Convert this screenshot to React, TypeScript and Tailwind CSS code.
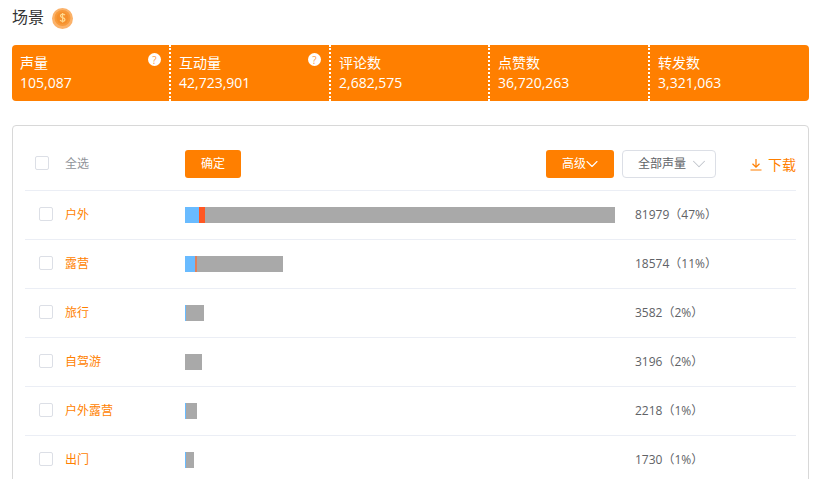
import { ChevronDown } from "lucide-react";

const font = "font-['Open_Sans','Noto_Sans_CJK_SC',sans-serif]";

const stats = [
  { label: "声量", value: "105,087", help: true, width: "w-[159px]" },
  { label: "互动量", value: "42,723,901", help: true, width: "w-[160px]" },
  { label: "评论数", value: "2,682,575", help: false, width: "w-[159px]" },
  { label: "点赞数", value: "36,720,263", help: false, width: "w-[160px]" },
  { label: "转发数", value: "3,321,063", help: false, width: "flex-1" },
];

const rows = [
  { name: "户外", count: "81979（47%）", total: 430, blue: 14, red: 6, redColor: "bg-[#ff5722]" },
  { name: "露营", count: "18574（11%）", total: 97.5, blue: 10, red: 1.5, redColor: "bg-[#e0805a]" },
  { name: "旅行", count: "3582（2%）", total: 19, blue: 1, red: 0, redColor: "" },
  { name: "自驾游", count: "3196（2%）", total: 17, blue: 0, red: 0, redColor: "" },
  { name: "户外露营", count: "2218（1%）", total: 12, blue: 1, red: 0, redColor: "" },
  { name: "出门", count: "1730（1%）", total: 9, blue: 1, red: 0, redColor: "" },
];

function Coin() {
  return (
    <svg width="21" height="21" viewBox="0 0 21 21">
      <circle cx="10.5" cy="10.5" r="10.5" fill="#fbb26a" />
      <circle cx="10.5" cy="10" r="8" fill="#f79a3a" />
      <circle cx="10.5" cy="10" r="6" fill="#f58f2c" />
      <path d="M13 7.2c-.6-.7-1.5-1-2.5-1-1.2 0-2 .7-2 1.7 0 2.2 4.4 1.3 4.4 3.6 0 1-.9 1.8-2.2 1.8-1 0-2-.4-2.6-1.1M10.6 5v9.6" fill="none" stroke="#ffd98f" strokeWidth="1.2" />
    </svg>
  );
}

function Help() {
  return (
    <span className="absolute right-[8px] top-[8px] flex h-[13px] w-[13px] items-center justify-center rounded-full bg-white text-[10px] leading-none text-[#ff9d45]">
      ?
    </span>
  );
}

function Checkbox() {
  return <span className="block h-[14px] w-[14px] rounded-[2px] border border-[#dcdfe6] bg-white" />;
}

function DownloadIcon() {
  return (
    <svg width="12" height="13" viewBox="0 0 12 13" fill="none" stroke="currentColor" strokeWidth="1.2">
      <path d="M6 1v8M2.5 5.8 6 9.2l3.5-3.4M0.5 12h11" />
    </svg>
  );
}

export default function App() {
  return (
    <div className={`${font} h-[479px] overflow-hidden bg-white pl-3 pr-[10px]`}>
      <div className="flex h-[45px] items-start pt-[7px]">
        <span className="text-[16px] leading-[20px] text-[#333]">场景</span>
        <span className="ml-[8px] mt-[1px]">
          <Coin />
        </span>
      </div>

      <div className="flex h-14 rounded-[4px] bg-[#ff7f00] text-white">
        {stats.map((s, i) => (
          <div
            key={s.label}
            className={`relative ${s.width} pl-2 pt-[8px] ${i < 4 ? "border-r-2 border-dotted border-white" : ""}`}
          >
            <div className="text-[14px] leading-[20px]">{s.label}</div>
            <div className="text-[14px] leading-[20px]">{s.value}</div>
            {s.help && <Help />}
          </div>
        ))}
      </div>

      <div className="mt-6 rounded-[4px] border border-[#d8d8d8] px-3">
        <div className="flex h-[65px] items-center border-b border-[#ebeef5] pt-3">
          <div className="mb-[2px] ml-[10px]">
            <Checkbox />
          </div>
          <span className="ml-[16px] w-[120px] text-[12px] text-[#909399]">全选</span>
          <button className="h-7 w-14 rounded-[3px] bg-[#ff7f00] text-[12px] text-white">确定</button>
          <button className="ml-auto flex h-7 w-[68px] items-center rounded-[3px] bg-[#ff7f00] pl-4 text-[12px] text-white">
            高级
            <ChevronDown size={20} strokeWidth={1.3} className="-ml-1" />
          </button>
          <div className="ml-2 flex h-7 w-[94px] items-center justify-between rounded-[4px] border border-[#dcdfe6] pl-[15px] pr-[5px] text-[12px] text-[#606266]">
            全部声量
            <ChevronDown size={22} strokeWidth={1.1} className="text-[#c0c4cc]" />
          </div>
          <div className="ml-[34px] flex w-[46px] items-center justify-between text-[14px] text-[#ff7f00]">
            <DownloadIcon />
            下载
          </div>
        </div>

        {rows.map((r) => (
          <div key={r.name} className="flex h-[49px] items-center border-b border-[#ebeef5]">
            <div className="mb-[2px] ml-[14px]">
              <Checkbox />
            </div>
            <span className="ml-3 w-[120px] text-[12px] text-[#ff7f00]">{r.name}</span>
            <div className="w-[450px]">
              <div className="flex h-4 bg-[#a9a9a9]" style={{ width: r.total }}>
                {r.blue > 0 && <div className="bg-[#69bbff]" style={{ width: r.blue }} />}
                {r.red > 0 && <div className={r.redColor} style={{ width: r.red }} />}
              </div>
            </div>
            <span className="text-[12px] text-[#606266]">{r.count}</span>
          </div>
        ))}
      </div>
    </div>
  );
}
